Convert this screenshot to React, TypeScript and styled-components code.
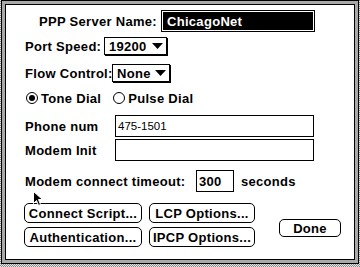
import React from "react";
import styled, { createGlobalStyle } from "styled-components";

const GlobalStyle = createGlobalStyle`
  html, body {
    margin: 0;
    padding: 0;
  }
  body {
    width: 360px;
    height: 267px;
    overflow: hidden;
    background: repeating-conic-gradient(#8a8a8a 0 25%, #e6e6e6 0 50%) 0 0 / 2px 2px;
    font-family: "Liberation Sans", Arial, sans-serif;
    color: #000;
  }
`;

const Frame = styled.div`
  position: relative;
  box-sizing: border-box;
  width: 358px;
  height: 264px;
  margin-left: 1px;
  border: 1px solid #000;
  padding: 3px;
  background: #a9a9a9;
`;

const Panel = styled.div`
  box-sizing: border-box;
  height: 100%;
  border: 1px solid #000;
  background: #fff;
  padding: 5px 0 0 19px;
  display: flex;
  flex-direction: column;
`;

const Row = styled.div<{ $top: number; $h: number }>`
  display: flex;
  align-items: center;
  height: ${({ $h }) => $h}px;
  margin-top: ${({ $top }) => $top}px;
`;

const Label = styled.span<{ $w?: number; $right?: boolean }>`
  flex-shrink: 0;
  box-sizing: border-box;
  width: ${({ $w }) => ($w ? `${$w}px` : "auto")};
  text-align: ${({ $right }) => ($right ? "right" : "left")};
  padding-right: ${({ $right }) => ($right ? "4px" : "0")};
  font-size: 13px;
  font-weight: 700;
  letter-spacing: 0.3px;
  white-space: nowrap;
`;

const Field = styled.div<{ $w: number; $selected?: boolean }>`
  box-sizing: border-box;
  width: ${({ $w }) => $w}px;
  height: 22px;
  display: flex;
  align-items: center;
  border: 1px solid #000;
  padding-left: ${({ $selected }) => ($selected ? "5px" : "2px")};
  background: ${({ $selected }) => ($selected ? "#000" : "#fff")};
  box-shadow: ${({ $selected }) => ($selected ? "inset 0 0 0 1px #fff" : "none")};
  color: ${({ $selected }) => ($selected ? "#fff" : "#000")};
  font-size: ${({ $selected }) => ($selected ? "13px" : "11.5px")};
  font-weight: ${({ $selected }) => ($selected ? 700 : 400)};
  letter-spacing: ${({ $selected }) => ($selected ? "0.3px" : "0")};
`;

const BoldValue = styled.span`
  font-size: 13px;
  font-weight: 700;
  letter-spacing: 0.3px;
`;

const Popup = styled.div<{ $w: number }>`
  box-sizing: border-box;
  width: ${({ $w }) => $w}px;
  height: 18px;
  display: flex;
  align-items: center;
  justify-content: space-between;
  padding: 0 3px 0 4px;
  border: 1px solid #000;
  box-shadow: 1px 1px 0 #000;
  font-size: 13px;
  font-weight: 700;
  letter-spacing: 0.3px;
`;

const RadioGroup = styled.div`
  display: flex;
  align-items: center;
  gap: 12px;
  margin-left: 1px;
`;

const RadioItem = styled.label`
  display: flex;
  align-items: center;
  gap: 3px;
  font-size: 13px;
  font-weight: 700;
  letter-spacing: 0.3px;
`;

const RadioCircle = styled.span<{ $on?: boolean }>`
  box-sizing: border-box;
  width: 12px;
  height: 12px;
  border: 1px solid #000;
  border-radius: 50%;
  display: flex;
  align-items: center;
  justify-content: center;

  &::after {
    content: "";
    width: 6px;
    height: 6px;
    border-radius: 50%;
    background: ${({ $on }) => ($on ? "#000" : "transparent")};
  }
`;

const Seconds = styled(Label)`
  margin-left: 7px;
`;

const Bottom = styled.div`
  display: flex;
  align-items: flex-start;
  margin-top: 11px;
  margin-left: -1px;
`;

const ButtonGrid = styled.div`
  display: grid;
  grid-template-columns: 118px 106px;
  grid-auto-rows: 20px;
  column-gap: 7px;
  row-gap: 4px;
`;

const Button = styled.button<{ $w?: number; $h?: number }>`
  box-sizing: border-box;
  width: ${({ $w }) => ($w ? `${$w}px` : "100%")};
  height: ${({ $h }) => ($h ? `${$h}px` : "100%")};
  margin: 0;
  padding: 0;
  border: 1px solid #000;
  border-radius: 5px;
  background: #fff;
  color: #000;
  font-family: "Liberation Sans", Arial, sans-serif;
  font-size: 13px;
  font-weight: 700;
  letter-spacing: 0.3px;
  white-space: nowrap;
`;

const DoneButton = styled(Button)`
  margin-left: 24px;
  margin-top: 16px;
`;

const Cursor = styled.svg`
  position: absolute;
  left: 31px;
  top: 190px;
`;

const Triangle = () => (
  <svg width="11" height="6" viewBox="0 0 11 6">
    <polygon points="0,0 11,0 5.5,6" fill="#000" />
  </svg>
);

export default function App() {
  return (
    <>
      <GlobalStyle />
      <Frame>
        <Panel>
          <Row $top={0} $h={22}>
            <Label $w={136} $right>
              PPP Server Name:
            </Label>
            <Field $w={154} $selected>
              ChicagoNet
            </Field>
          </Row>

          <Row $top={5} $h={18}>
            <Label $w={79}>Port Speed:</Label>
            <Popup $w={63}>
              <span>19200</span>
              <Triangle />
            </Popup>
          </Row>

          <Row $top={9} $h={18}>
            <Label $w={87}>Flow Control:</Label>
            <Popup $w={58}>
              <span>None</span>
              <Triangle />
            </Popup>
          </Row>

          <Row $top={10} $h={12}>
            <RadioGroup>
              <RadioItem>
                <RadioCircle $on />
                Tone Dial
              </RadioItem>
              <RadioItem>
                <RadioCircle />
                Pulse Dial
              </RadioItem>
            </RadioGroup>
          </Row>

          <Row $top={11} $h={22}>
            <Label $w={90}>Phone num</Label>
            <Field $w={199}>475-1501</Field>
          </Row>

          <Row $top={2} $h={22}>
            <Label $w={90}>Modem Init</Label>
            <Field $w={199} />
          </Row>

          <Row $top={9} $h={22}>
            <Label $w={171}>Modem connect timeout:</Label>
            <Field $w={38}>
              <BoldValue>300</BoldValue>
            </Field>
            <Seconds>seconds</Seconds>
          </Row>

          <Bottom>
            <ButtonGrid>
              <Button>Connect Script...</Button>
              <Button>LCP Options...</Button>
              <Button>Authentication...</Button>
              <Button>IPCP Options...</Button>
            </ButtonGrid>
            <DoneButton $w={62} $h={18}>
              Done
            </DoneButton>
          </Bottom>
        </Panel>

        <Cursor width="11" height="16" viewBox="0 0 11 16">
          <polygon
            points="0.5,0.5 0.5,12.5 3.5,9.5 5.5,14.5 7.5,13.5 5.5,8.5 9.5,8.5"
            fill="#000"
            stroke="#fff"
            strokeWidth="1"
          />
        </Cursor>
      </Frame>
    </>
  );
}
